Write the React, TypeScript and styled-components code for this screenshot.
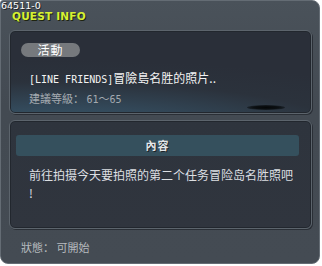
import React from "react";
import styled, { createGlobalStyle } from "styled-components";

const Global = createGlobalStyle`
  html, body { margin: 0; padding: 0; background: #ffffff; }
  body { font-family: "Noto Sans CJK SC", "DejaVu Sans", sans-serif; }
`;

const Frame = styled.div`
  position: relative;
  width: 320px;
  height: 264px;
  box-sizing: border-box;
  background: linear-gradient(180deg, #4a525a 0%, #434a52 40%, #444b53 100%);
  border: 1px solid #646c74;
  border-radius: 3px 8px 8px 8px;
  padding: 0 7px 0 8px;
  display: flex;
  flex-direction: column;
`;

const Header = styled.div`
  height: 29px;
  display: flex;
  flex-direction: column;
`;

const IdText = styled.div`
  position: absolute;
  left: 0;
  top: 0;
  font-family: "DejaVu Sans", sans-serif;
  font-size: 9.5px;
  line-height: 10px;
  color: #ffffff;
  text-shadow: 1px 1px 0 #202428;
`;

const Title = styled.div`
  margin-top: 10px;
  margin-left: 3px;
  font-family: "DejaVu Sans", sans-serif;
  font-weight: bold;
  font-size: 10.5px;
  line-height: 10px;
  letter-spacing: 0.2px;
  color: #d6f234;
  text-shadow: 1px 1px 0 #1e2410;
`;

const Panel = styled.div<{ $h: number; $teal?: boolean }>`
  position: relative;
  height: ${(p) => p.$h}px;
  box-sizing: border-box;
  border: 1px solid #5c646c;
  border-radius: 6px;
  box-shadow: inset 0 0 0 1px #22272e, 1px 1px 0 #2a2f36;
  background: ${(p) =>
    p.$teal
      ? "radial-gradient(ellipse 140% 90% at 15% 125%, #3d5f6c 0%, #33495a 35%, #2b323c 70%, #2a2f39 100%)"
      : "linear-gradient(180deg, #2e343d 0%, #30353e 100%)"};
  display: flex;
  flex-direction: column;
`;

const Gap = styled.div<{ $h: number }>`
  height: ${(p) => p.$h}px;
  flex-shrink: 0;
`;

const Pill = styled.div`
  margin: 12px 0 0 11px;
  width: 59px;
  height: 14px;
  border-radius: 7px;
  background: #76797d;
  color: #ffffff;
  font-size: 12px;
  line-height: 14px;
  text-align: center;
  letter-spacing: 1px;
`;

const Mono = styled.span`
  font-family: "DejaVu Sans Mono", "Liberation Mono", monospace;
  font-size: 10px;
`;

const QuestName = styled.div`
  margin: 13px 0 0 19px;
  font-size: 12px;
  line-height: 16px;
  color: #f2f2f2;
`;

const Level = styled.div`
  margin: 2px 0 0 19px;
  font-size: 11px;
  line-height: 16px;
  color: #a4aab0;
`;

const Shadow = styled.div`
  position: absolute;
  left: 237px;
  top: 74px;
  width: 38px;
  height: 5px;
  border-radius: 50%;
  background: radial-gradient(ellipse at center, #050708 0%, #0b0f12 45%, rgba(10,14,18,0) 100%);
`;

const SectionBar = styled.div`
  margin: 14px 0 0 6px;
  width: 283px;
  height: 21px;
  border-radius: 3px;
  background: #35505d;
  color: #e4e6e8;
  font-weight: bold;
  font-size: 11px;
  line-height: 21px;
  text-align: center;
  letter-spacing: 1px;
  text-shadow: 1px 1px 0 #1c2328;
`;

const Body = styled.div`
  margin: 10px 0 0 19px;
  font-size: 12px;
  line-height: 18px;
  color: #dcdfe2;
`;

const Status = styled.div`
  margin: 10px 0 0 12px;
  font-size: 11px;
  line-height: 16px;
  color: #b6babe;
`;

export default function App() {
  return (
    <>
      <Global />
      <Frame>
        <IdText>64511-0</IdText>
        <Header>
          <Title>QUEST INFO</Title>
        </Header>
        <Panel $h={84} $teal>
          <Pill>活動</Pill>
          <QuestName>
            <Mono>[LINE FRIENDS]</Mono>冒險島名胜的照片..
          </QuestName>
          <Level>
            建議等級： <Mono>61</Mono>～<Mono>65</Mono>
          </Level>
          <Shadow />
        </Panel>
        <Gap $h={6} />
        <Panel $h={109}>
          <SectionBar>內容</SectionBar>
          <Body>
            前往拍摄今天要拍照的第二个任务冒险岛名胜照吧
            <br />!
          </Body>
        </Panel>
        <Status>狀態： 可開始</Status>
      </Frame>
    </>
  );
}
